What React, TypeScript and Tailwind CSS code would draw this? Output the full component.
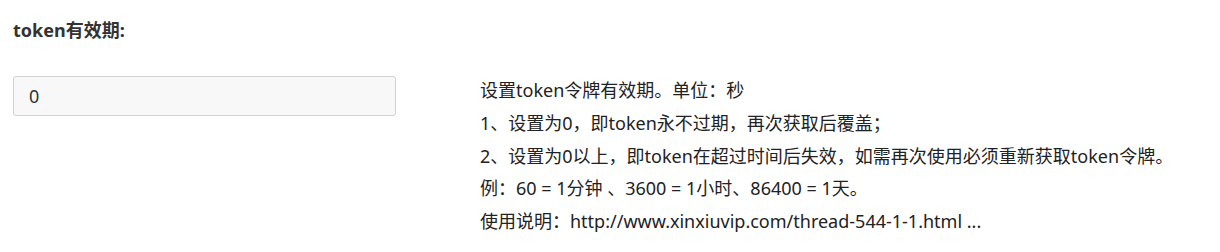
import React from 'react';

const font = { fontFamily: '"Noto Sans", "Noto Sans CJK SC", sans-serif' };

const lines = [
  '设置token令牌有效期。单位：秒',
  '1、设置为0，即token永不过期，再次获取后覆盖；',
  '2、设置为0以上，即token在超过时间后失效，如需再次使用必须重新获取token令牌。',
  '例：60 = 1分钟 、3600 = 1小时、86400 = 1天。',
  '使用说明：http://www.xinxiuvip.com/thread-544-1-1.html ...',
];

const App: React.FC = () => {
  return (
    <div className="w-[1220px] h-[252px] bg-white text-[#333]" style={font}>
      <div className="px-[13px] pt-[15px]">
        <h3 className="text-[18px] font-bold leading-[30px] text-[#333]">token有效期:</h3>
      </div>
      <div className="flex pt-[31px] px-[13px]">
        <div className="w-[383px]">
          <input
            type="text"
            defaultValue="0"
            className="w-full h-[40px] bg-[#f8f8f8] border border-[#d2d2d2] rounded-[3px] px-[15px] text-[18px] text-[#333] outline-none"
            style={font}
          />
        </div>
        <div className="ml-[84px] -mt-[2px] text-[18px] leading-[32.75px] text-[#222]">
          {lines.map((l, i) => (
            <div key={i}>{l}</div>
          ))}
        </div>
      </div>
    </div>
  );
};

export default App;
